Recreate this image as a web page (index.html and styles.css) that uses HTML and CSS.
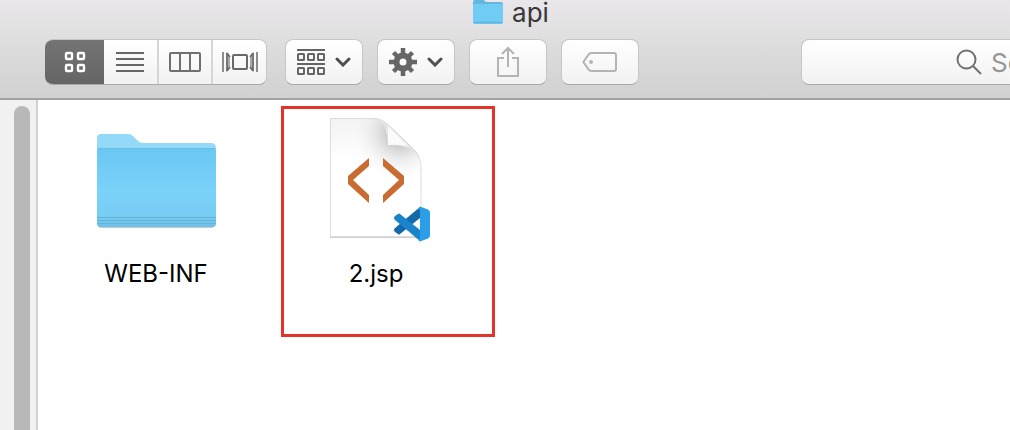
FILE: index.html
```html
<!DOCTYPE html>
<html lang="en">
<head>
<meta charset="utf-8">
<title>api</title>
<link rel="stylesheet" href="styles.css">
</head>
<body>
<div class="window">
  <header class="header">
    <h1 class="title">
      <svg class="title-icon" viewBox="0 0 30 26" aria-hidden="true">
        <path d="M0 2q0-2 2-2h8q1 0 2 1l1 1h15q2 0 2 2v4H0z" fill="#62b7e0"/>
        <rect y="4" width="30" height="20" rx="1.5" fill="#70cbf5"/>
        <path d="M1 22.500h28" stroke="#5fb4dc" stroke-width="1.500"/>
      </svg>
      <span>api</span>
    </h1>
    <div class="toolbar">
      <div class="segments" role="group" aria-label="View">
        <button class="segment segment-active" type="button" aria-label="Icons">
          <svg width="22" height="22" viewBox="0 0 22 22" fill="none" stroke="#fff" stroke-width="2.400"><rect x="2" y="2" width="6" height="6" rx="1"/><rect x="14" y="2" width="6" height="6" rx="1"/><rect x="2" y="14" width="6" height="6" rx="1"/><rect x="14" y="14" width="6" height="6" rx="1"/></svg>
        </button>
        <button class="segment" type="button" aria-label="List">
          <svg width="28" height="22" viewBox="0 0 28 22" stroke="#676767" stroke-width="2"><path d="M0 2h28M0 8h28M0 14h28M0 20h28"/></svg>
        </button>
        <button class="segment" type="button" aria-label="Columns">
          <svg width="32" height="22" viewBox="0 0 32 22" fill="none" stroke="#707070" stroke-width="2"><rect x="1" y="2" width="30" height="18" rx="1"/><path d="M11 2v18M21 2v18"/></svg>
        </button>
        <button class="segment" type="button" aria-label="Cover flow">
          <svg width="36" height="22" viewBox="0 0 36 22" fill="none" stroke="#686868" stroke-width="2"><rect x="11" y="4" width="14" height="14" rx="1"/><path d="M1 1v20M35 1v20" stroke-width="1.500"/><path d="M4 1l4 4v12l-4 4zM32 1l-4 4v12l4 4z" fill="#a8a8a8" stroke="none"/><path d="M5 2v18M31 2v18" stroke-width="1.500"/><path d="M5 2l3 4M5 20l3-4M31 2l-3 4M31 20l-3-4" stroke-width="1.500"/></svg>
        </button>
      </div>
      <button class="tool" type="button" aria-label="Arrange">
        <svg width="28" height="28" viewBox="0 0 28 28" fill="none" stroke="#656565" stroke-width="2"><path d="M0 2h28M0 16h28"/><rect x="1" y="6" width="6" height="6" rx=".5"/><rect x="11" y="6" width="6" height="6" rx=".5"/><rect x="21" y="6" width="6" height="6" rx=".5"/><rect x="1" y="20" width="6" height="6" rx=".5"/><rect x="11" y="20" width="6" height="6" rx=".5"/><rect x="21" y="20" width="6" height="6" rx=".5"/></svg>
        <svg class="chevron" viewBox="0 0 16 10"><path d="M2 2l6 6 6-6"/></svg>
      </button>
      <button class="tool" type="button" aria-label="Action">
        <svg width="28" height="28" viewBox="-14 -14 28 28" fill="none" stroke="#666"><circle r="6.500" stroke-width="6"/><path stroke-width="4.500" d="M0-14v6M0 14v-6M-14 0h6M14 0h-6M-9.500-9.500l4 4M9.500 9.500l-4-4M-9.500 9.500l4-4M9.500-9.500l-4 4"/></svg>
        <svg class="chevron" viewBox="0 0 16 10"><path d="M2 2l6 6 6-6"/></svg>
      </button>
      <button class="tool" type="button" aria-label="Share">
        <svg width="24" height="32" viewBox="0 0 24 32" fill="none" stroke="#b4b4b4" stroke-width="2"><path d="M8 12H2v18h20V12h-6M12 21V2M6 8l6-6 6 6"/></svg>
      </button>
      <button class="tool" type="button" aria-label="Tags">
        <svg width="36" height="22" viewBox="0 0 36 22" fill="none" stroke="#b4b4b4" stroke-width="2"><path d="M10 2h22q2 0 2 2v14q0 2-2 2H10q-2 0-3-1l-5-7q-1-1 0-2l5-7q1-1 3-1z"/><circle cx="9" cy="11" r="2" fill="#b4b4b4" stroke="none"/></svg>
      </button>
      <label class="search">
        <svg width="26" height="26" viewBox="0 0 26 26" fill="none" stroke="#707070" stroke-width="2"><circle cx="10.500" cy="10.500" r="9"/><path d="M17 17l8 8"/></svg>
        <input class="search-input" type="search" placeholder="Search" aria-label="Search">
      </label>
    </div>
  </header>
  <div class="body">
    <aside class="sidebar"><div class="thumb"></div></aside>
    <main class="files">
      <figure class="file">
        <svg class="file-icon" viewBox="0 0 128 128" aria-hidden="true">
          <defs>
            <linearGradient id="front" x2="0" y2="1"><stop stop-color="#69c7f3"/><stop offset=".55" stop-color="#7bd2fa"/><stop offset=".85" stop-color="#78cdf3"/><stop offset="1" stop-color="#6dc0e7"/></linearGradient>
          </defs>
          <path d="M6 109h117q0 5-4 5H9q-3 0-3-5z" fill="#c2cbd0"/>
          <path d="M5 24q0-4 4-4h27q3 0 5 2l5 5q2 2 5 2h68q5 0 5 5v30H5z" fill="#94daf8"/>
          <path d="M5 37q0-3 3-3h113q3 0 3 3v72q0 4-3 4H8q-3 0-3-4z" fill="url(#front)"/>
          <path d="M5 103.500h119M5 106.500h119M5 109.500h119" stroke="#62b3da"/>
          <path d="M6 34.500h117" stroke="#65bee9"/>
        </svg>
        <figcaption>WEB-INF</figcaption>
      </figure>
      <figure class="file">
        <svg class="file-icon" viewBox="0 0 128 128" aria-hidden="true">
          <defs>
            <linearGradient id="paper" x1="0" y1="1" x2="0" y2="0"><stop offset=".65" stop-color="#fff"/><stop offset="1" stop-color="#f3f3f3"/></linearGradient>
            <radialGradient id="shade" gradientUnits="userSpaceOnUse" cx="88" cy="20" r="50"><stop offset=".2" stop-color="#aaa" stop-opacity=".65"/><stop offset=".5" stop-color="#c8c8c8" stop-opacity=".35"/><stop offset="1" stop-color="#fff" stop-opacity="0"/></radialGradient>
          </defs>
          <path d="M18 123h92" stroke="#cfcfcf" stroke-width="2"/>
          <path d="M18.500 4.500H62q8 0 15 7l24 23q8 8 8 19v69h-90.500z" fill="url(#paper)" stroke="#dcdcdc"/>
          <path d="M18.500 4.500H62q8 0 15 7l24 23q8 8 8 19v69h-90.500z" fill="url(#shade)"/>
          <path d="M66 5q9 6 10 26 14-1 27 6L78 12q-5-6-12-7z" fill="#e4e4e4"/>
          <path d="M76 12v19q9-1 20 1z" fill="#fbfbfb"/>
          <path d="M57 44v8L41 66l16 15v8L36 70v-8zM71 44v8l16 14-16 15v8l21-19v-8z" fill="#c96c31"/>
          <path d="M83 118l3 2q1 1 2 0l20-16V93L83 114q-2 2 0 4z" fill="#1369aa"/>
          <path d="M83 102l3-2q1-1 2 0l20 16v11L83 106q-2-2 0-4z" fill="#1b83c9"/>
          <path d="M108 92.500l8 3q2 1 2 3v23q0 2-2 3l-8 3q-1 0-2-2l2-1V96l-2-1z" fill="#2b9ee8"/>
        </svg>
        <figcaption>2.jsp</figcaption>
      </figure>
      <div class="highlight"></div>
    </main>
  </div>
</div>
</body>
</html>
```
FILE: styles.css
```css
* { box-sizing: border-box; }
body {
  margin: 0;
  font-family: Inter, "Liberation Sans", sans-serif;
  color: #000;
  background: #fff;
}
.window {
  display: flex;
  flex-direction: column;
  min-height: 100vh;
  overflow: hidden;
}
.header {
  background: linear-gradient(#e9e7e9, #d1d1d1);
  border-bottom: 2px solid #a3a3a3;
  padding-bottom: 13px;
}
.title {
  display: flex;
  justify-content: center;
  gap: 9px;
  height: 39px;
  margin: 0;
  padding-left: 12px;
  font-size: 26px;
  line-height: 26px;
  font-weight: 400;
  color: #393739;
}
.title-icon { width: 30px; height: 26px; }
.toolbar {
  display: flex;
  gap: 14px;
  padding-left: 45px;
}
.segments, .tool, .search {
  flex: none;
  height: 46px;
  border: 1px solid #c6c6c6;
  border-bottom-color: #aaa;
  border-radius: 8px;
  background: linear-gradient(#fff, #f2f2f2);
}
.segments {
  display: flex;
  width: 222px;
  margin-right: 4px;
  border-left: 0;
  overflow: hidden;
}
.segment {
  display: flex;
  flex: 1;
  align-items: center;
  justify-content: center;
  padding: 0;
  border: 0;
  border-left: 2px solid #d6d6d6;
  background: none;
}
.segment-active {
  flex: 0 0 59px;
  border: 0;
  background: linear-gradient(#747474, #656565);
}
.segment-active + .segment { border: 0; }
.tool {
  display: flex;
  width: 78px;
  align-items: center;
  justify-content: center;
  gap: 10px;
  padding: 0;
}
.chevron {
  width: 16px;
  height: 10px;
  fill: none;
  stroke: #505050;
  stroke-width: 3;
  stroke-linecap: round;
}
.search {
  display: flex;
  align-items: center;
  gap: 9px;
  width: 392px;
  margin-left: 148px;
  padding-left: 154px;
}
.search-input {
  width: 120px;
  padding: 0;
  border: 0;
  outline: 0;
  background: none;
  font: inherit;
  font-size: 26px;
}
.search-input::placeholder { color: #969696; }
.body { display: flex; flex: 1; }
.sidebar {
  display: flex;
  flex: none;
  justify-content: flex-end;
  width: 38px;
  padding: 6px 6px 0 0;
  border-right: 2px solid #d2d2d2;
  background: #f1f1f1;
}
.thumb {
  width: 16px;
  border-radius: 8px 8px 0 0;
  background: #b8b8b8;
}
.files {
  position: relative;
  display: flex;
  flex: 1;
  align-items: flex-start;
  padding: 14px 8px;
}
.file {
  display: flex;
  flex-direction: column;
  align-items: center;
  gap: 17px;
  width: 220px;
  margin: 0;
  font-size: 24px;
  line-height: 30px;
}
.file-icon { width: 128px; height: 128px; }
.highlight {
  position: absolute;
  top: 6px;
  left: 243px;
  width: 214px;
  height: 231px;
  border: 3px solid #e5322b;
}
```
